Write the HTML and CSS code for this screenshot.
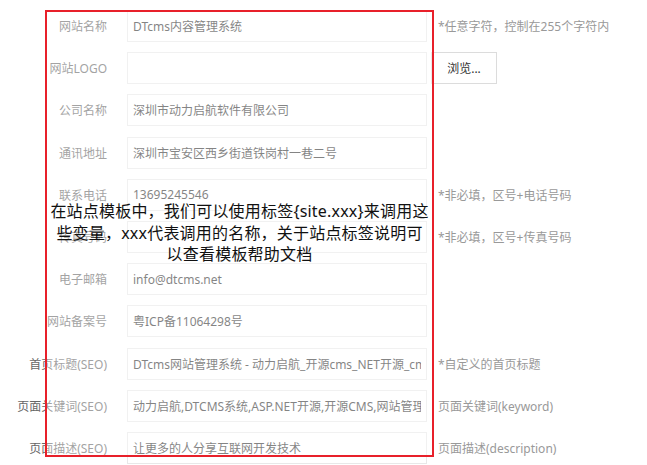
FILE: index.html
```html
<!DOCTYPE html>
<html lang="zh-CN">
<head>
<meta charset="utf-8">
<title>站点设置</title>
<link rel="stylesheet" href="styles.css">
</head>
<body>
<div class="page">
  <form class="form">
    <div class="row">
      <label class="lbl">网站名称</label>
      <input class="inp" type="text" value="DTcms内容管理系统">
      <span class="note">*任意字符，控制在255个字符内</span>
    </div>
    <div class="row">
      <label class="lbl">网站LOGO</label>
      <input class="inp" type="text" value="">
      <button class="btn" type="button">浏览...</button>
    </div>
    <div class="row">
      <label class="lbl">公司名称</label>
      <input class="inp" type="text" value="深圳市动力启航软件有限公司">
    </div>
    <div class="row">
      <label class="lbl">通讯地址</label>
      <input class="inp" type="text" value="深圳市宝安区西乡街道铁岗村一巷二号">
    </div>
    <div class="row">
      <label class="lbl">联系电话</label>
      <input class="inp" type="text" value="13695245546">
      <span class="note">*非必填，区号+电话号码</span>
    </div>
    <div class="row">
      <label class="lbl">传真号码</label>
      <input class="inp" type="text" value="">
      <span class="note">*非必填，区号+传真号码</span>
    </div>
    <div class="row">
      <label class="lbl">电子邮箱</label>
      <input class="inp" type="text" value="info@dtcms.net">
    </div>
    <div class="row">
      <label class="lbl">网站备案号</label>
      <input class="inp" type="text" value="粤ICP备11064298号">
    </div>
    <div class="row">
      <label class="lbl">首页标题(SEO)</label>
      <input class="inp" type="text" value="DTcms网站管理系统 - 动力启航_开源cms_NET开源_cms建站系统">
      <span class="note">*自定义的首页标题</span>
    </div>
    <div class="row">
      <label class="lbl">页面关键词(SEO)</label>
      <input class="inp" type="text" value="动力启航,DTCMS系统,ASP.NET开源,开源CMS,网站管理系统">
      <span class="note">页面关键词(keyword)</span>
    </div>
    <div class="row">
      <label class="lbl">页面描述(SEO)</label>
      <input class="inp" type="text" value="让更多的人分享互联网开发技术">
      <span class="note">页面描述(description)</span>
    </div>
  </form>
  <div class="annot">
    <p class="annot-text"><span class="annot-line">在站点模板中，我们可以使用标签{site.xxx}来调用这</span><span class="annot-line">些变量，xxx代表调用的名称，关于站点标签说明可</span><span class="annot-line">以查看模板帮助文档</span></p>
  </div>
</div>
</body>
</html>
```

FILE: styles.css
```css
html, body {
  margin: 0;
  padding: 0;
  background: #fff;
}

body {
  font-family: "Noto Sans", "Noto Sans CJK SC", sans-serif;
  font-size: 12px;
}

.page {
  position: relative;
  width: 647px;
  height: 465px;
  overflow: hidden;
}

.form {
  display: flex;
  flex-direction: column;
  gap: 10.2px;
  padding-top: 10px;
  margin: 0;
}

.row {
  display: flex;
  align-items: center;
  height: 32px;
}

.lbl {
  flex: none;
  width: 107px;
  margin-right: 20px;
  text-align: right;
  color: #666;
  white-space: nowrap;
}

.inp {
  flex: none;
  box-sizing: border-box;
  width: 300px;
  height: 32px;
  margin: 0;
  padding: 0 5px;
  border: 1px solid #e8e8e8;
  border-radius: 0;
  outline: none;
  background: #fff;
  font-family: "Noto Sans", "Noto Sans CJK SC", sans-serif;
  font-size: 12px;
  color: #333;
}

.note {
  margin-left: 11px;
  color: #999;
  white-space: nowrap;
}

.btn {
  flex: none;
  box-sizing: border-box;
  width: 66px;
  height: 32px;
  margin: 0 0 0 4px;
  padding: 0;
  border: 1px solid #dcdcdc;
  border-radius: 0;
  background: #fff;
  font-family: "Noto Sans", "Noto Sans CJK SC", sans-serif;
  font-size: 12px;
  color: #333;
}

.annot {
  position: absolute;
  left: 45px;
  top: 10px;
  width: 389px;
  height: 447px;
  box-sizing: border-box;
  border: 2px solid #e8202a;
  background: rgba(255, 255, 255, 0.4);
  display: flex;
  align-items: center;
  justify-content: center;
}

.annot-text {
  margin: 0;
  display: flex;
  flex-direction: column;
  align-items: center;
  text-align: center;
  font-family: "Noto Sans", "Noto Sans CJK SC", sans-serif;
  font-size: 16px;
  line-height: 21.5px;
  letter-spacing: 0.2px;
  color: #111;
}

.annot-line {
  display: block;
  white-space: nowrap;
}
```
